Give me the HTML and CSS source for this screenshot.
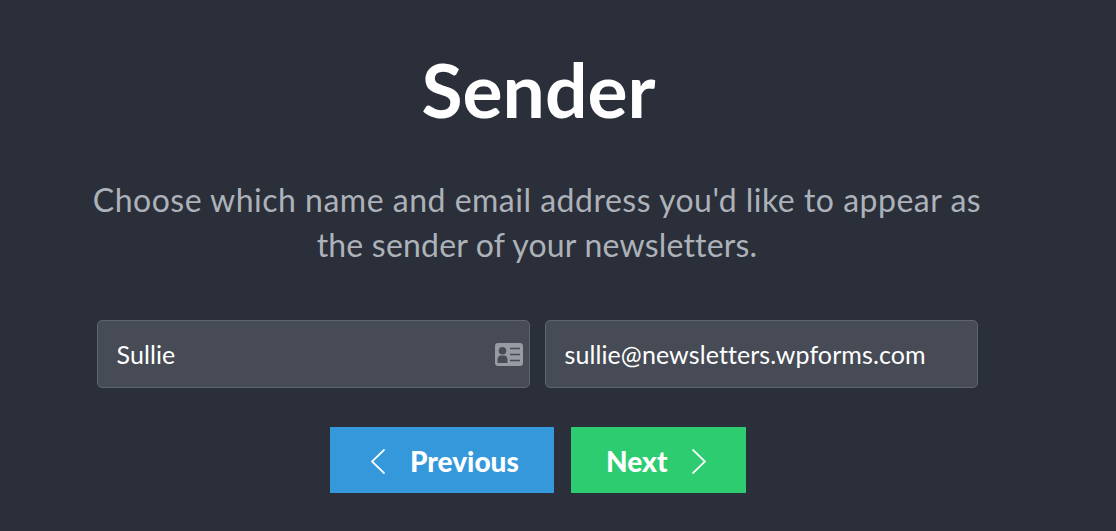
FILE: index.html
```html
<!DOCTYPE html>
<html lang="en">
<head>
    <meta charset="UTF-8">
    <title>Sender</title>
    <link rel="stylesheet" href="styles.css">
</head>
<body>
    <div class="container">
        <h1>Sender</h1>
        <p class="intro">Choose which name and email address you'd like to appear as<br><span class="intro-end">the sender of your newsletters.</span></p>

        <div class="fields">
            <div class="field">
                <span>Sullie</span>
                <svg class="card-icon" width="28" height="23" viewBox="0 0 28 23">
                    <path fill="#979ba3" fill-rule="evenodd" d="M3 0h22a3 3 0 0 1 3 3v17a3 3 0 0 1-3 3H3a3 3 0 0 1-3-3V3a3 3 0 0 1 3-3zM7.500 4a3.800 3.800 0 1 0 0 7.600a3.800 3.800 0 0 0 0-7.600zM2.500 20h10v-3.500c0-2.300-1.500-4-3.200-4H5.700c-1.700 0-3.200 1.700-3.200 4zM15 4.700v1.600h10V4.700zM15 10.700v1.600h10v-1.600zM15 16.700v1.600h10v-1.600z"/>
                </svg>
            </div>
            <div class="field">
                <span>sullie@newsletters.wpforms.com</span>
            </div>
        </div>

        <div class="buttons">
            <button class="btn btn-prev">
                <svg width="14" height="25" viewBox="0 0 14 25"><path d="M13.500 0.500 1 12.500l12.500 12" fill="none" stroke="#fff" stroke-width="1.800"/></svg>
                Previous
            </button>
            <button class="btn btn-next">
                Next
                <svg width="14" height="25" viewBox="0 0 14 25"><path d="M0.500 0.500 13 12.500 0.500 24.500" fill="none" stroke="#fff" stroke-width="1.800"/></svg>
            </button>
        </div>
    </div>
</body>
</html>
```
FILE: styles.css
```css
body {
    margin: 0;
    height: 531px;
    overflow: hidden;
    background-color: #2a2f39;
    font-family: Lato, sans-serif;
}

.container {
    display: flex;
    flex-direction: column;
    align-items: center;
    width: 1074px;
}

h1 {
    margin: 45px 0 0 3px;
    font-size: 75px;
    line-height: 88px;
    font-weight: 700;
    color: #fff;
}

.intro {
    margin: 44px 0 0;
    font-size: 32px;
    letter-spacing: 0.5px;
    line-height: 45px;
    text-align: center;
    white-space: nowrap;
    color: #adb2ba;
}

.intro-end {
    letter-spacing: 0.2px;
}

.fields {
    display: flex;
    gap: 15px;
    margin-top: 53px;
}

.field {
    display: flex;
    align-items: center;
    justify-content: space-between;
    box-sizing: border-box;
    width: 433px;
    height: 68px;
    padding: 0 6px 0 19px;
    background-color: #464b56;
    border: 1px solid #5f6570;
    border-radius: 5px;
    font-size: 25px;
    letter-spacing: 0.1px;
    color: #fff;
}

.buttons {
    display: flex;
    gap: 17px;
    margin: 39px 0 0 2px;
}

.btn {
    display: flex;
    align-items: center;
    gap: 25px;
    height: 66px;
    border: none;
    font-family: Lato, sans-serif;
    font-size: 28px;
    font-weight: 900;
    color: #fff;
}

.btn-prev {
    width: 224px;
    padding: 2px 0 0 41px;
    background-color: #3498db;
}

.btn-next {
    width: 175px;
    padding: 2px 0 0 35px;
    background-color: #2ecc71;
}
```
